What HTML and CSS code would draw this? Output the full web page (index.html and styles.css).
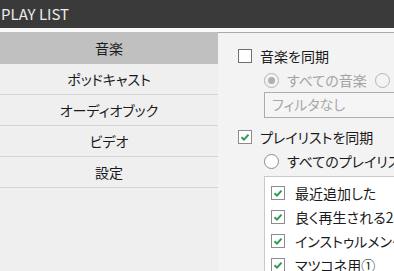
FILE: index.html
```html
<!DOCTYPE html>
<html lang="ja">
<head>
    <meta charset="UTF-8">
    <title>Play List</title>
    <link rel="stylesheet" href="styles.css">
</head>
<body>
    <div class="titlebar">PLAY LIST</div>

    <div class="main">
        <div class="sidebar">
            <div class="nav-item selected">音楽</div>
            <div class="nav-item">ポッドキャスト</div>
            <div class="nav-item">オーディオブック</div>
            <div class="nav-item">ビデオ</div>
            <div class="nav-item">設定</div>
        </div>

        <div class="panel">
            <div class="row first">
                <span class="check"></span>
                <span>音楽を同期</span>
            </div>
            <div class="row indent disabled">
                <span class="radio on"></span>
                <span>すべての音楽</span>
                <span class="radio spaced"></span>
            </div>
            <div class="filter">フィルタなし</div>

            <div class="row second">
                <span class="check checked">
                    <svg viewBox="0 0 14 14" width="14" height="14"><polyline points="3.5,7.2 6,9.6 10.5,4.6" /></svg>
                </span>
                <span>プレイリストを同期</span>
            </div>
            <div class="row indent">
                <span class="radio"></span>
                <span>すべてのプレイリスト</span>
            </div>

            <div class="listbox">
                <div class="row item">
                    <span class="check checked">
                        <svg viewBox="0 0 14 14" width="14" height="14"><polyline points="3.5,7.2 6,9.6 10.5,4.6" /></svg>
                    </span>
                    <span>最近追加した</span>
                </div>
                <div class="row item">
                    <span class="check checked">
                        <svg viewBox="0 0 14 14" width="14" height="14"><polyline points="3.5,7.2 6,9.6 10.5,4.6" /></svg>
                    </span>
                    <span>良く再生される25</span>
                </div>
                <div class="row item">
                    <span class="check checked">
                        <svg viewBox="0 0 14 14" width="14" height="14"><polyline points="3.5,7.2 6,9.6 10.5,4.6" /></svg>
                    </span>
                    <span>インストゥルメンタル</span>
                </div>
                <div class="row item">
                    <span class="check checked">
                        <svg viewBox="0 0 14 14" width="14" height="14"><polyline points="3.5,7.2 6,9.6 10.5,4.6" /></svg>
                    </span>
                    <span>マツコネ用①</span>
                </div>
            </div>
        </div>
    </div>
</body>
</html>
```

FILE: styles.css
```css
body {
    margin: 0;
    width: 394px;
    height: 271px;
    overflow: hidden;
    background: #f9f9f9;
    font-family: "Noto Sans CJK JP", "Noto Sans", sans-serif;
    font-feature-settings: "palt";
    font-size: 14px;
    color: #1a1a1a;
}

.titlebar {
    height: 28px;
    line-height: 27px;
    padding-left: 1px;
    background: #3a3a3a;
    color: #ececec;
    font-size: 15px;
    font-feature-settings: normal;
    white-space: nowrap;
}

.main {
    display: flex;
    margin-top: 4px;
    height: 239px;
}

.sidebar {
    width: 218px;
    flex-shrink: 0;
    background: #efefef;
}

.nav-item {
    height: 30px;
    line-height: 30px;
    text-align: center;
    border-bottom: 1px solid #d5d5d5;
}

.nav-item.selected {
    height: 32px;
    line-height: 32px;
    background: #c0c0c0;
    border-bottom: none;
}

.panel {
    flex: 1;
    min-width: 0;
    background: #f3f3f3;
    border-top: 1px solid #a9a9a9;
    padding-left: 20px;
    white-space: nowrap;
    overflow: hidden;
}

.row {
    display: flex;
    align-items: center;
    height: 24px;
    gap: 8px;
}

.row.first {
    margin-top: 11px;
}

.row.second {
    margin-top: 7px;
}

.indent {
    margin-left: 26px;
}

.disabled {
    color: #a3a3a3;
}

.check {
    width: 12px;
    height: 12px;
    flex-shrink: 0;
    border: 1px solid #6f6f6f;
    background: #fff;
    position: relative;
}

.check.checked {
    border-color: #8c8c8c;
}

.check svg {
    position: absolute;
    left: -1px;
    top: -1px;
}

.check polyline {
    fill: none;
    stroke: #2f9a4f;
    stroke-width: 2;
}

.radio {
    width: 13px;
    height: 13px;
    flex-shrink: 0;
    border: 1px solid #8a8a8a;
    border-radius: 50%;
    background: #fff;
    box-sizing: content-box;
    position: relative;
}

.disabled .radio {
    border-color: #b4b4b4;
    background: #f3f3f3;
}

.radio.on::after {
    content: "";
    position: absolute;
    left: 3px;
    top: 3px;
    width: 7px;
    height: 7px;
    border-radius: 50%;
    background: #b0b0b0;
}

.radio.spaced {
    margin-left: 0;
}

.filter {
    margin-left: 26px;
    height: 24px;
    line-height: 23px;
    border: 1px solid #acacac;
    border-right: none;
    background: #f5f5f5;
    padding-left: 7px;
    color: #a8a8a8;
}

.listbox {
    margin-top: 3px;
    margin-left: 26px;
    height: 120px;
    padding-top: 4px;
    padding-left: 6px;
    background: #fff;
    border: 1px solid #cacaca;
    border-right: none;
}

.row.item {
    gap: 10px;
}
```
